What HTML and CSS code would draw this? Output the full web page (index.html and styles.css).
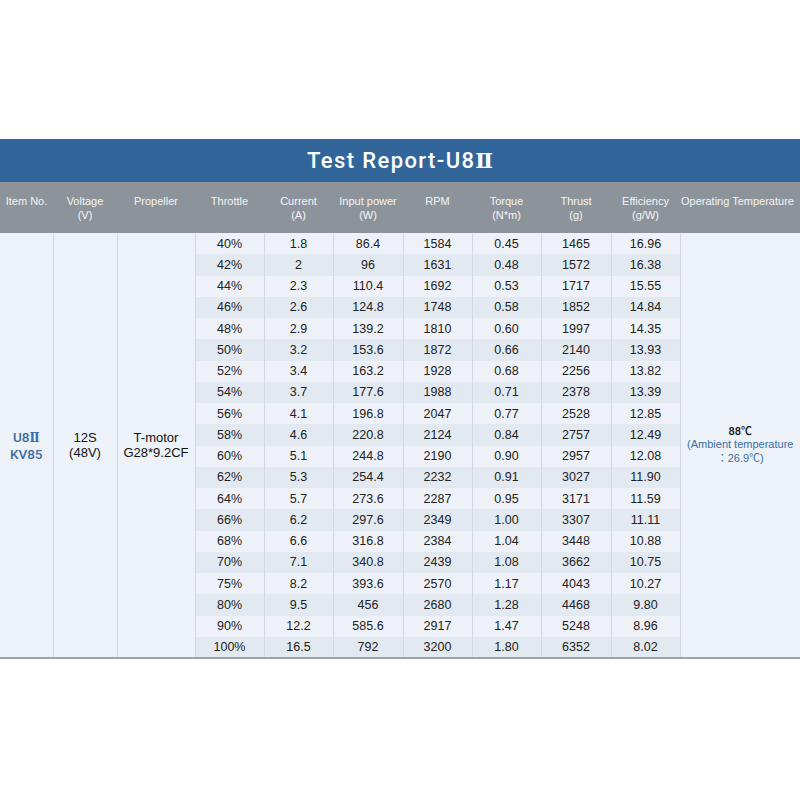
FILE: index.html
```html
<!DOCTYPE html>
<html>
<head>
<meta charset="utf-8">
<link rel="stylesheet" href="styles.css">
</head>
<body>
<div class="report">
  <div class="title">Test Report-U8<span class="roman">Ⅱ</span></div>
  <table class="grid">
    <colgroup>
      <col class="c53"><col class="c64"><col class="c78"><col class="c69"><col class="c69"><col class="c70"><col class="c69"><col class="c69"><col class="c70"><col class="c69"><col class="c120">
    </colgroup>
    <thead>
      <tr>
        <th>Item No.</th>
        <th>Voltage<br>(V)</th>
        <th>Propeller</th>
        <th>Throttle</th>
        <th>Current<br>(A)</th>
        <th>Input power<br>(W)</th>
        <th>RPM</th>
        <th>Torque<br>(N*m)</th>
        <th>Thrust<br>(g)</th>
        <th>Efficiency<br>(g/W)</th>
        <th class="temp-head">Operating Temperature</th>
      </tr>
    </thead>
    <tbody>
      <tr>
        <td rowspan="20" class="merged item">U8<span class="roman">Ⅱ</span><br>KV85</td>
        <td rowspan="20" class="merged big">12S<br>(48V)</td>
        <td rowspan="20" class="merged big">T-motor<br>G28*9.2CF</td>
        <td>40%</td><td>1.8</td><td>86.4</td><td>1584</td><td>0.45</td><td>1465</td><td>16.96</td>
        <td rowspan="20" class="merged temp"><span class="t-main">88℃</span><br><span class="t-amb">(Ambient temperature<br>：26.9℃)</span></td>
      </tr>
      <tr><td>42%</td><td>2</td><td>96</td><td>1631</td><td>0.48</td><td>1572</td><td>16.38</td></tr>
      <tr><td>44%</td><td>2.3</td><td>110.4</td><td>1692</td><td>0.53</td><td>1717</td><td>15.55</td></tr>
      <tr><td>46%</td><td>2.6</td><td>124.8</td><td>1748</td><td>0.58</td><td>1852</td><td>14.84</td></tr>
      <tr><td>48%</td><td>2.9</td><td>139.2</td><td>1810</td><td>0.60</td><td>1997</td><td>14.35</td></tr>
      <tr><td>50%</td><td>3.2</td><td>153.6</td><td>1872</td><td>0.66</td><td>2140</td><td>13.93</td></tr>
      <tr><td>52%</td><td>3.4</td><td>163.2</td><td>1928</td><td>0.68</td><td>2256</td><td>13.82</td></tr>
      <tr><td>54%</td><td>3.7</td><td>177.6</td><td>1988</td><td>0.71</td><td>2378</td><td>13.39</td></tr>
      <tr><td>56%</td><td>4.1</td><td>196.8</td><td>2047</td><td>0.77</td><td>2528</td><td>12.85</td></tr>
      <tr><td>58%</td><td>4.6</td><td>220.8</td><td>2124</td><td>0.84</td><td>2757</td><td>12.49</td></tr>
      <tr><td>60%</td><td>5.1</td><td>244.8</td><td>2190</td><td>0.90</td><td>2957</td><td>12.08</td></tr>
      <tr><td>62%</td><td>5.3</td><td>254.4</td><td>2232</td><td>0.91</td><td>3027</td><td>11.90</td></tr>
      <tr><td>64%</td><td>5.7</td><td>273.6</td><td>2287</td><td>0.95</td><td>3171</td><td>11.59</td></tr>
      <tr><td>66%</td><td>6.2</td><td>297.6</td><td>2349</td><td>1.00</td><td>3307</td><td>11.11</td></tr>
      <tr><td>68%</td><td>6.6</td><td>316.8</td><td>2384</td><td>1.04</td><td>3448</td><td>10.88</td></tr>
      <tr><td>70%</td><td>7.1</td><td>340.8</td><td>2439</td><td>1.08</td><td>3662</td><td>10.75</td></tr>
      <tr><td>75%</td><td>8.2</td><td>393.6</td><td>2570</td><td>1.17</td><td>4043</td><td>10.27</td></tr>
      <tr><td>80%</td><td>9.5</td><td>456</td><td>2680</td><td>1.28</td><td>4468</td><td>9.80</td></tr>
      <tr><td>90%</td><td>12.2</td><td>585.6</td><td>2917</td><td>1.47</td><td>5248</td><td>8.96</td></tr>
      <tr><td>100%</td><td>16.5</td><td>792</td><td>3200</td><td>1.80</td><td>6352</td><td>8.02</td></tr>
    </tbody>
  </table>
</div>
</body>
</html>
```
FILE: styles.css
```css
* { box-sizing: border-box; }
html, body {
  margin: 0;
  padding: 0;
  background: #ffffff;
  overflow: hidden;
}
body {
  font-family: "Liberation Sans", "Noto Sans CJK JP", sans-serif;
  color: #222222;
}
.report {
  margin-top: 139px;
  width: 800px;
  overflow: hidden;
}
.title {
  height: 43px;
  background: #32669a;
  color: #ffffff;
  font-family: Roboto, "Liberation Sans", sans-serif;
  font-weight: 500;
  font-size: 22px;
  letter-spacing: 1.4px;
  text-align: center;
  line-height: 43px;
}
.roman {
  font-family: "DejaVu Serif", "DejaVu Sans", serif;
  letter-spacing: 0;
}
.title .roman {
  font-weight: bold;
  font-size: 21px;
}
.grid {
  width: 800px;
  table-layout: fixed;
  border-collapse: collapse;
  border-spacing: 0;
  border-bottom: 2px solid #9da3ab;
}
.c53 { width: 53px; }
.c64 { width: 64px; }
.c78 { width: 78px; }
.c69 { width: 69px; }
.c70 { width: 70px; }
.c120 { width: 120px; }
.grid th {
  height: 51px;
  background: #8d939a;
  color: #f4f5f6;
  font-weight: normal;
  font-size: 11px;
  line-height: 14px;
  vertical-align: top;
  padding: 12px 0 0;
  text-align: center;
  white-space: nowrap;
}
.grid th.temp-head {
  text-align: left;
  padding-left: 1px;
}
.grid td {
  height: 21.25px;
  padding: 0;
  font-size: 12.5px;
  text-align: center;
  vertical-align: middle;
  border-left: 1px solid #d3d8df;
  background: #eef2f8;
  white-space: nowrap;
}
.grid tbody tr:nth-child(even) td {
  background: #e3e9f1;
}
.grid tbody tr td.merged {
  background: #edf1f8;
}
.grid td.item {
  border-left: none;
  color: #3b6ea6;
  font-family: Roboto, "Liberation Sans", sans-serif;
  font-weight: 500;
  font-size: 13.5px;
  line-height: 16px;
}
.grid td.item .roman {
  font-size: 12px;
  font-weight: bold;
}
.grid td.big {
  font-size: 13px;
  line-height: 15px;
  color: #111111;
}
.grid td.temp {
  font-size: 11px;
  line-height: 13.5px;
  overflow: hidden;
}
.t-main {
  color: #111111;
  font-family: Roboto, "Liberation Sans", "Noto Sans CJK JP", sans-serif;
  font-weight: 500;
}
.t-amb {
  color: #3b6ea6;
}
```
